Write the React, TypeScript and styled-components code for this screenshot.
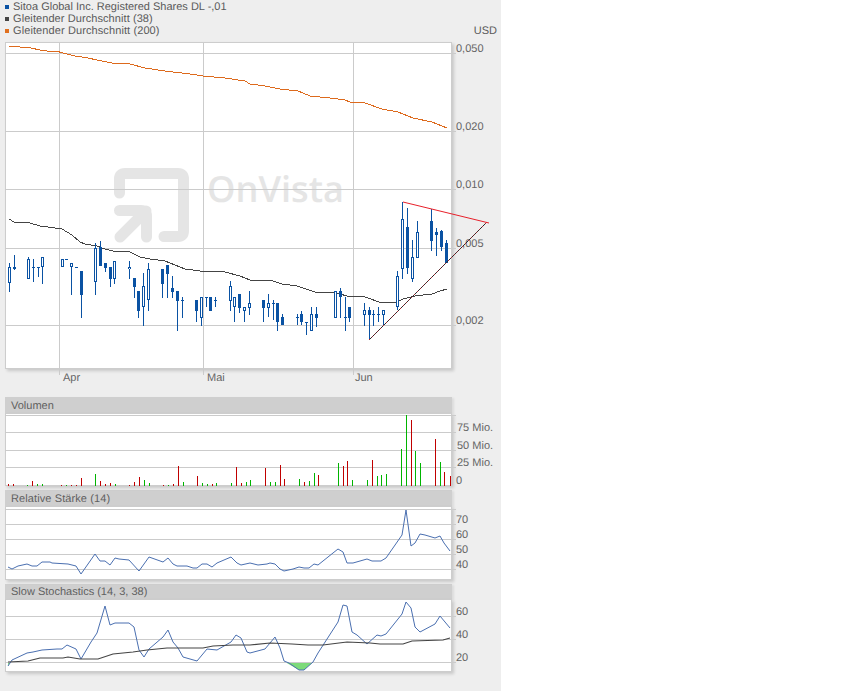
import React from "react";
import styled, { createGlobalStyle } from "styled-components";

const GlobalStyle = createGlobalStyle`
  html, body { margin: 0; padding: 0; background: #fff; }
  body { font-family: "Liberation Sans", Arial, sans-serif; text-rendering: geometricPrecision; }
`;

const Page = styled.div`
  width: 501px;
  height: 691px;
  background: #eeeeee;
  padding-left: 5px;
  box-sizing: border-box;
  overflow: hidden;
  color: #5a5a5a;
`;
const Legend = styled.div`
  height: 36px;
  margin-bottom: 6px;
  padding-right: 4px;
`;
const LegendRow = styled.div<{ $tracking?: number }>`
  display: flex;
  align-items: flex-start;
  height: 12px;
  font-size: 11px;
  line-height: 14px;
  letter-spacing: ${(p) => p.$tracking ?? 0}px;
`;
const Swatch = styled.span<{ $color: string }>`
  width: 4px;
  height: 4px;
  margin: 5px 4px 0 0;
  background: ${(p) => p.$color};
`;
const Currency = styled.span`
  margin-left: auto;
  letter-spacing: 0;
`;
const Panel = styled.section<{ $top?: number }>`
  width: 447px;
  margin-top: ${(p) => p.$top ?? 0}px;
`;
const PanelHeader = styled.header<{ $height: number; $tracking?: number }>`
  height: ${(p) => p.$height}px;
  line-height: ${(p) => p.$height + 2}px;
  padding-left: 6px;
  background: #cfcfcf;
  font-size: 11px;
  letter-spacing: ${(p) => p.$tracking ?? 0}px;
  color: #5f5f5f;
  box-shadow: 2px 1px 2px rgba(0, 0, 0, 0.08);
`;
const Plot = styled.div<{ $height: number }>`
  position: relative;
  height: ${(p) => p.$height}px;
  background: #fff;
  box-shadow: inset 0 0 0 1px #cdcdcd, 2px 2px 3px rgba(0, 0, 0, 0.16);
`;
const PlotSvg = styled.svg`
  position: absolute;
  left: 0;
  top: 0;
  overflow: visible;
  display: block;
`;
const AxisText = styled.text`
  font-family: "Liberation Sans", Arial, sans-serif;
  font-size: 11px;
  fill: #646464;
`;
const MarkText = styled.text`
  font-family: "Open Sans", sans-serif;
  font-size: 36px;
  font-weight: 600;
  fill: #e5e5e5;
`;

type Pt = [number, number];
const BLUE = "#0a52a3";
const GRID = "#cbcbcb";

// [x, wickTop, wickBottom, bodyTop, bodyBottom, kind]  kind: 1 filled, 0 hollow, 2 tick
type Candle = [number, number, number, number, number, number];
const candles: Candle[] = [
  [9, 263, 292, 267, 283, 0], [14, 255, 270, 267, 269, 1], [28, 257, 279, 259, 279, 0],
  [33, 259, 282, 267, 267, 2], [38, 267, 277, 267, 267, 2], [42, 257, 284, 257, 267, 0],
  [62, 259, 267, 259, 267, 0], [66, 259, 259, 259, 259, 2], [71, 263, 295, 263, 267, 0],
  [76, 267, 267, 267, 267, 2], [81, 271, 318, 271, 295, 1], [95, 243, 295, 248, 282, 0],
  [100, 241, 266, 247, 266, 1], [105, 263, 272, 263, 268, 1], [110, 267, 287, 267, 279, 1],
  [114, 261, 284, 261, 279, 0], [129, 261, 279, 267, 269, 0], [134, 278, 298, 278, 287, 1],
  [138, 291, 318, 291, 311, 1], [143, 273, 326, 286, 307, 0], [148, 263, 311, 269, 300, 0],
  [162, 269, 298, 269, 284, 1], [167, 265, 298, 265, 274, 1], [172, 276, 298, 288, 292, 1],
  [177, 291, 331, 291, 301, 1], [182, 297, 318, 300, 300, 2], [196, 300, 322, 300, 311, 1],
  [201, 297, 326, 297, 318, 0], [206, 297, 307, 297, 297, 2], [210, 297, 311, 297, 311, 1],
  [215, 297, 307, 300, 300, 2], [230, 281, 311, 286, 301, 0], [234, 297, 322, 297, 307, 0],
  [239, 294, 313, 294, 308, 1], [244, 307, 322, 307, 311, 0], [249, 291, 315, 303, 308, 0],
  [263, 300, 322, 300, 308, 1], [268, 294, 317, 303, 308, 0], [273, 300, 320, 303, 303, 2],
  [277, 303, 331, 303, 322, 1], [282, 314, 325, 317, 325, 1], [297, 314, 325, 317, 317, 2],
  [301, 311, 325, 314, 322, 1], [306, 322, 335, 322, 322, 2], [311, 307, 331, 314, 331, 0],
  [316, 307, 327, 314, 318, 1], [335, 291, 318, 291, 318, 0], [340, 288, 318, 291, 297, 1],
  [345, 297, 331, 317, 317, 2], [349, 307, 322, 307, 318, 1], [364, 303, 326, 310, 315, 0],
  [369, 307, 340, 310, 315, 1], [373, 310, 326, 314, 314, 2], [378, 307, 322, 314, 314, 2],
  [383, 310, 326, 310, 315, 0], [397, 271, 310, 276, 307, 0], [402, 202, 279, 219, 269, 0],
  [407, 208, 274, 227, 268, 1], [412, 240, 282, 257, 279, 0], [417, 221, 258, 232, 258, 0],
  [431, 209, 251, 221, 241, 1], [436, 228, 256, 232, 235, 1], [441, 230, 251, 231, 247, 1],
  [446, 240, 263, 243, 263, 1],
];

const ma200: Pt[] = [[9, 46], [20, 47], [31, 48], [40, 50], [47, 51], [56, 51], [63, 53], [75, 56], [88, 58], [97, 60], [112, 63], [130, 64], [145, 68], [165, 71], [190, 74], [203, 76], [225, 78], [245, 81], [250, 84], [265, 86], [280, 89], [298, 91], [310, 96], [330, 98], [345, 100], [350, 102], [365, 103], [382, 109], [398, 112], [413, 118], [432, 122], [447, 128]];
const ma38: Pt[] = [[9, 219], [14, 222], [30, 223], [40, 226], [55, 228], [62, 229], [72, 235], [80, 242], [85, 244], [97, 246], [105, 249], [113, 251], [130, 252], [140, 257], [150, 259], [165, 261], [175, 265], [185, 269], [200, 271], [225, 272], [240, 276], [250, 280], [270, 280], [282, 284], [297, 286], [315, 292], [333, 292], [347, 296], [365, 297], [382, 303], [397, 302], [403, 299], [415, 296], [432, 294], [440, 291], [447, 289]];
const rsi: Pt[] = [[8, 567], [12, 569], [18, 566], [27, 564], [32, 566], [37, 566], [42, 562], [50, 562], [52, 563], [68, 564], [76, 566], [81, 574], [95, 554], [100, 561], [105, 561], [110, 565], [115, 558], [119, 559], [129, 560], [139, 571], [149, 557], [163, 562], [168, 558], [173, 564], [177, 566], [187, 566], [193, 568], [197, 568], [202, 564], [207, 564], [212, 567], [217, 563], [231, 557], [237, 563], [241, 565], [250, 563], [258, 565], [267, 564], [270, 563], [275, 564], [280, 569], [284, 571], [293, 569], [299, 567], [304, 568], [309, 568], [314, 564], [318, 565], [328, 557], [338, 549], [343, 552], [347, 563], [353, 563], [367, 559], [372, 561], [381, 561], [386, 558], [402, 535], [406, 510], [411, 546], [415, 543], [420, 534], [425, 535], [435, 538], [440, 536], [444, 543], [450, 551]];
const stochK: Pt[] = [[8, 666], [12, 660], [27, 653], [33, 652], [42, 650], [57, 649], [62, 649], [67, 645], [76, 649], [81, 659], [91, 642], [97, 633], [105, 606], [110, 625], [115, 623], [129, 623], [134, 627], [139, 650], [144, 657], [149, 649], [163, 637], [168, 630], [173, 642], [178, 648], [183, 657], [197, 661], [207, 649], [217, 650], [231, 642], [236, 635], [241, 638], [247, 652], [250, 653], [265, 649], [275, 637], [280, 648], [284, 661], [289, 663], [299, 670], [304, 670], [313, 662], [318, 653], [338, 622], [343, 605], [347, 606], [352, 632], [357, 635], [367, 644], [377, 635], [381, 636], [386, 634], [402, 614], [406, 602], [411, 608], [415, 627], [420, 632], [435, 624], [440, 616], [450, 628]];
const stochD: Pt[] = [[8, 662], [28, 661], [40, 658], [63, 658], [68, 657], [80, 659], [98, 659], [113, 654], [133, 652], [147, 650], [167, 648], [203, 648], [213, 646], [233, 645], [250, 645], [270, 643], [292, 644], [308, 645], [323, 645], [347, 642], [370, 643], [380, 644], [403, 644], [412, 641], [443, 640], [450, 638]];

// [x, top, kind] kind: 0 red, 1 green
const volumes: [number, number, number][] = [
  [8, 484, 0], [13, 484, 0], [27, 485, 1], [32, 481, 0], [37, 484, 1], [42, 484, 1], [61, 485, 0], [66, 485, 1], [71, 485, 0], [76, 485, 0], [81, 478, 0], [95, 474, 1], [100, 481, 0], [105, 484, 0], [110, 483, 0], [115, 484, 1], [129, 485, 0], [134, 482, 0], [139, 477, 0], [144, 480, 1], [149, 483, 1], [163, 485, 0], [168, 485, 1], [173, 484, 0], [178, 466, 0], [183, 482, 1], [197, 476, 0], [202, 483, 1], [207, 484, 1], [212, 484, 0], [216, 483, 1], [231, 483, 1], [236, 467, 0], [241, 483, 0], [246, 482, 1], [250, 480, 1], [265, 468, 0], [270, 482, 1], [275, 482, 1], [280, 465, 0], [284, 479, 0], [299, 479, 1], [304, 482, 0], [309, 481, 1], [314, 473, 1], [318, 475, 0], [338, 463, 1], [343, 466, 0], [347, 461, 0], [352, 480, 1], [367, 480, 1], [372, 460, 0], [377, 476, 1], [381, 475, 1], [386, 474, 1], [401, 449, 1], [406, 415, 1], [411, 420, 0], [415, 451, 1], [420, 463, 1], [435, 439, 0], [440, 462, 1], [444, 472, 0], [450, 476, 0],
];

const pts = (a: Pt[]) => a.map((p) => p.join(",")).join(" ");

const HLines = ({ ys, to = 456 }: { ys: number[]; to?: number }) => (
  <>
    {ys.map((y) => (
      <rect key={y} x={5} y={y} width={to - 5} height={1} fill={GRID} shapeRendering="crispEdges" />
    ))}
  </>
);

const Axis = ({ items, x = 456 }: { items: [string, number][]; x?: number }) => (
  <>
    {items.map(([t, y]) => (
      <AxisText key={t} x={x} y={y}>{t}</AxisText>
    ))}
  </>
);

const Line = ({ p, color, crisp, width = 1 }: { p: Pt[]; color: string; crisp?: boolean; width?: number }) => (
  <polyline points={pts(p)} fill="none" stroke={color} strokeWidth={width} shapeRendering={crisp ? "crispEdges" : undefined} />
);

const CandleMark = ({ c }: { c: Candle }) => {
  const [x, wt, wb, bt, bb, kind] = c;
  return (
    <g fill={BLUE} shapeRendering="crispEdges">
      {wb > wt && <rect x={x} y={wt} width={1} height={wb - wt} />}
      {kind === 2 ? (
        <rect x={x - 1} y={bt} width={3} height={1} />
      ) : (
        <rect x={x - 1} y={bt} width={3} height={bb - bt} />
      )}
      {kind === 0 && <rect x={x} y={bt + 1} width={1} height={Math.max(bb - bt - 2, 1)} fill="#fff" />}
    </g>
  );
};

const Watermark = () => (
  <g>
    <path d="M119.5 193 V179 Q119.5 173.5 125 173.5 H178 Q183.5 173.5 183.5 179 V231 Q183.5 236.5 178 236.5 H164" fill="none" stroke="#e5e5e5" strokeWidth={11} strokeLinecap="round" />
    <path d="M119.5 210.5 H141 Q146.5 210.5 146.5 216 V237 M146 211 L120 237" fill="none" stroke="#e5e5e5" strokeWidth={11} strokeLinecap="round" />
    <MarkText x={207} y={202} textLength={137} lengthAdjust="spacingAndGlyphs">OnVista</MarkText>
  </g>
);

const MainChart = () => (
  <PlotSvg width={447} height={327} viewBox="5 42 447 327">
    <Watermark />
    <HLines ys={[53, 131, 189, 248, 325]} />
    {[59, 203, 353].map((x) => (
      <rect key={x} x={x} y={43} width={1} height={332} fill={GRID} shapeRendering="crispEdges" />
    ))}
    <Axis items={[["0,050", 52], ["0,020", 130], ["0,010", 188], ["0,005", 247], ["0,002", 324]]} />
    <AxisText x={63} y={381}>Apr</AxisText>
    <AxisText x={207} y={381}>Mai</AxisText>
    <AxisText x={355} y={381}>Jun</AxisText>
    <Line p={ma200} color="#dd6a1d" crisp />
    <Line p={ma38} color="#444444" crisp />
    {candles.map((c) => (
      <CandleMark key={c[0]} c={c} />
    ))}
    <line x1={369} y1={340} x2={487} y2={222} stroke="#2a2a2a" strokeWidth={1} />
    <line x1={369} y1={340} x2={487} y2={222} stroke="#e8202a" strokeWidth={1} strokeDasharray="1 3" />
    <line x1={403} y1={202} x2={489} y2={223} stroke="#e8202a" strokeWidth={1} />
  </PlotSvg>
);

const VolumeChart = () => (
  <PlotSvg width={447} height={73} viewBox="5 413 447 73">
    <HLines ys={[415, 432, 450, 467]} />
    {volumes.map(([x, top, k]) => (
      <rect key={x} x={x} y={top} width={1} height={486 - top} fill={k ? "#00b400" : "#c00000"} shapeRendering="crispEdges" />
    ))}
    <Axis items={[["75 Mio.", 431], ["50 Mio.", 449], ["25 Mio.", 466]]} x={457} />
    <Axis items={[["0", 484]]} />
  </PlotSvg>
);

const RsiChart = () => (
  <PlotSvg width={447} height={74} viewBox="5 506 447 74">
    <HLines ys={[509, 524, 539, 554, 569]} />
    <Line p={rsi} color="#4a6fb0" />
    <Axis items={[["70", 523], ["60", 538], ["50", 553], ["40", 568]]} />
  </PlotSvg>
);

const StochChart = () => (
  <PlotSvg width={447} height={73} viewBox="5 599 447 73">
    <polygon points="285,662 313,662 304,670 299,670" fill="#7ddb7a" />
    <polygon points="8,662 10,662 8,666" fill="#7ddb7a" />
    <HLines ys={[616, 639, 662]} />
    <Line p={stochK} color="#4a6fb0" />
    <Line p={stochD} color="#444444" width={1.1} />
    <Axis items={[["60", 615], ["40", 638], ["20", 661]]} />
  </PlotSvg>
);

export default function App() {
  return (
    <Page>
      <GlobalStyle />
      <Legend>
        <LegendRow><Swatch $color={BLUE} />Sitoa Global Inc. Registered Shares DL -,01</LegendRow>
        <LegendRow $tracking={0.08}><Swatch $color="#444" />Gleitender Durchschnitt (38)</LegendRow>
        <LegendRow $tracking={0.1}><Swatch $color="#e0701f" />Gleitender Durchschnitt (200)<Currency>USD</Currency></LegendRow>
      </Legend>
      <Panel>
        <Plot $height={327}><MainChart /></Plot>
      </Panel>
      <Panel $top={28}>
        <PanelHeader $height={16}>Volumen</PanelHeader>
        <Plot $height={73}><VolumeChart /></Plot>
      </Panel>
      <Panel $top={4}>
        <PanelHeader $height={16} $tracking={0.1}>Relative Stärke (14)</PanelHeader>
        <Plot $height={74}><RsiChart /></Plot>
      </Panel>
      <Panel $top={4}>
        <PanelHeader $height={15}>Slow Stochastics (14, 3, 38)</PanelHeader>
        <Plot $height={73}><StochChart /></Plot>
      </Panel>
    </Page>
  );
}
